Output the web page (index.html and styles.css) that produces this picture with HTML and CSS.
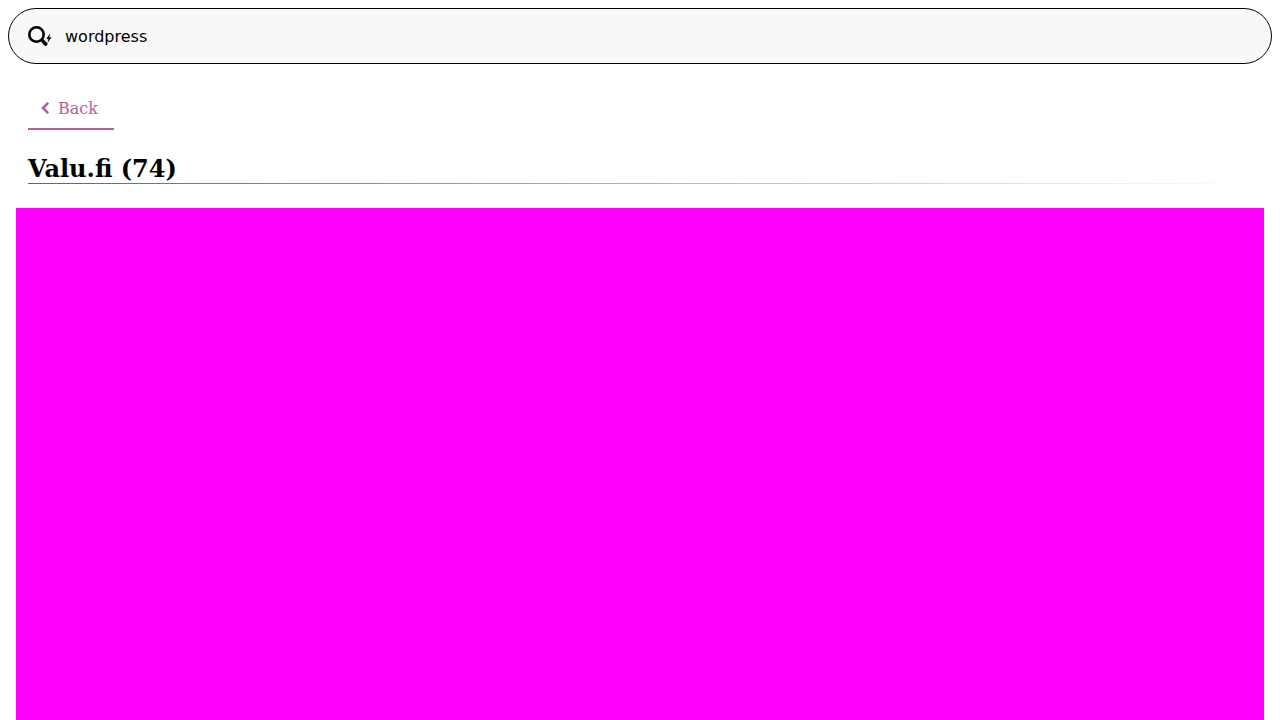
FILE: index.html
```html
<!DOCTYPE html>
<html lang="en">
<head>
<meta charset="utf-8">
<meta name="viewport" content="width=device-width, initial-scale=1">
<title>Search: wordpress</title>
<link rel="stylesheet" href="styles.css">
</head>
<body>
<div class="page">
  <form class="search" role="search">
    <svg class="search-icon" viewBox="0 0 24 20" aria-hidden="true">
      <circle cx="8.5" cy="8.5" r="7.2" fill="none" stroke="#000" stroke-width="2.6"/>
      <path d="M13 14 L14.3 12.6 L18.8 16.8 Q19.8 18 18.7 19.2 Q17.4 20.4 16.2 19 L12.8 14.8 Z" stroke="#000" stroke-width="0.6"/>
      <path d="M21.7 8.3 L18.7 12.7 H20.6 L19.9 16.1 L23.2 11.4 H21.1 Z" stroke="#000" stroke-width="0.4"/>
    </svg>
    <input class="search-input" type="text" value="wordpress" aria-label="Search">
  </form>
  <main class="results">
    <header class="results-header">
      <button class="back" type="button">
        <svg class="back-icon" viewBox="0 0 8 12" aria-hidden="true"><path d="M7.2 0.8 L2 6 L7.2 11.2" fill="none" stroke="currentColor" stroke-width="2.6"/></svg>
        Back
      </button>
      <h2 class="title">Valu.fi (74)</h2>
    </header>
    <section class="result-list" aria-label="Results"></section>
  </main>
</div>
</body>
</html>
```
FILE: styles.css
```css
* {
  box-sizing: border-box;
}

body {
  margin: 0;
  background: #fff;
  color: #000;
  font-family: "DejaVu Serif", serif;
  font-size: 16px;
}

.page {
  display: flex;
  flex-direction: column;
  min-height: 100vh;
  padding: 8px 8px 0;
}

.search {
  display: flex;
  align-items: center;
  gap: 12px;
  height: 56px;
  padding: 0 19px;
  border: 1px solid #000;
  border-radius: 28px;
  background: #f8f8f8;
}

.search-icon {
  flex: none;
  width: 24px;
  height: 20px;
}

.search-input {
  flex: 1;
  min-width: 0;
  padding: 0 1px;
  border: 0;
  outline: 0;
  background: transparent;
  color: #000;
  font-family: "DejaVu Sans", sans-serif;
  font-size: 16px;
}

.results {
  display: flex;
  flex: 1;
  flex-direction: column;
  gap: 24px;
  padding: 24px 8px 0;
}

.results-header {
  padding: 0 12px;
}

.back {
  display: flex;
  align-items: center;
  gap: 9px;
  height: 42px;
  padding: 0 16px 0 13px;
  border: 0;
  border-bottom: 2px solid #b96097;
  background: transparent;
  color: #b96097;
  font-family: inherit;
  font-size: 16px;
}

.back-icon {
  width: 8px;
  height: 12px;
}

.title {
  margin: 24px 0 0;
  border-bottom: 1px solid;
  border-image: linear-gradient(to right, #666, #fff) 1;
  font-size: 24px;
  line-height: 29px;
}

.result-list {
  flex: 1;
  background: #f0f;
}
```
